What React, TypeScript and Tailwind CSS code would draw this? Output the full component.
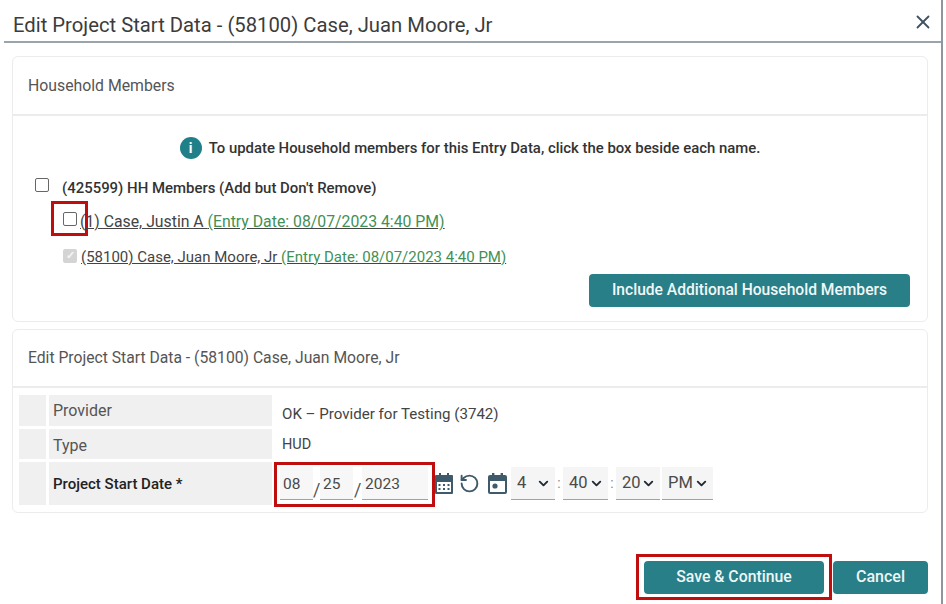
import { ChevronDown, RotateCcw, X } from "lucide-react";

const TEAL = "bg-[#287f88]";

const CalendarGrid = () => (
  <svg width="18" height="21" viewBox="0 0 18 21" fill="#3f5a6b">
    <rect x="4" y="0" width="2" height="4" />
    <rect x="12" y="0" width="2" height="4" />
    <path d="M1 2h16a1 1 0 0 1 1 1v17a1 1 0 0 1-1 1H1a1 1 0 0 1-1-1V3a1 1 0 0 1 1-1z" />
    <rect x="2" y="9" width="14" height="10" fill="#fff" />
    <g fill="#3f5a6b">
      <rect x="3.5" y="11" width="2" height="2" />
      <rect x="8" y="11" width="2" height="2" />
      <rect x="12.5" y="11" width="2" height="2" />
      <rect x="3.5" y="15" width="2" height="2" />
      <rect x="8" y="15" width="2" height="2" />
      <rect x="12.5" y="15" width="2" height="2" />
    </g>
  </svg>
);

const CalendarToday = () => (
  <svg width="19" height="21" viewBox="0 0 19 21" fill="#3f5a6b">
    <rect x="4" y="0" width="2.4" height="4" />
    <rect x="12.6" y="0" width="2.4" height="4" />
    <path d="M2 2h15a2 2 0 0 1 2 2v15a2 2 0 0 1-2 2H2a2 2 0 0 1-2-2V4a2 2 0 0 1 2-2z" />
    <rect x="2" y="8" width="15" height="11" fill="#fff" />
    <circle cx="7" cy="13" r="2.6" />
  </svg>
);

const TimeSelect = ({ value, width }: { value: string; width: string }) => (
  <div className={`flex h-[33px] items-center justify-between border-b border-[#9aa5ab] bg-[#f5f5f5] pl-[6px] pr-[4px] ${width}`}>
    <span className="text-[16.5px] text-[#4a4a4a]">{value}</span>
    <ChevronDown size={15} strokeWidth={3} className="text-[#1f2933]" />
  </div>
);

const DatePart = ({ value, width }: { value: string; width: string }) => (
  <div className={`flex h-[33px] items-center border-b border-[#9aa5ab] bg-[#f7f7f7] pl-[3px] pt-[3px] text-[15.5px] text-[#4a4a4a] ${width}`}>
    {value}
  </div>
);

const Row = ({
  label,
  bold,
  height,
  labelPad,
  children,
}: {
  label: string;
  bold?: boolean;
  height: string;
  labelPad: string;
  children: React.ReactNode;
}) => (
  <div className={`flex ${height}`}>
    <div className="w-[27px] bg-[#f0f0f0]" />
    <div className={`ml-[3px] flex w-[223px] items-center bg-[#f0f0f0] pl-[4px] ${labelPad} ${bold ? "text-[15px] font-medium text-[#222]" : "text-[16px] text-[#555]"}`}>
      {label}
    </div>
    {children}
  </div>
);

export default function App() {
  return (
    <div
      className="h-[604px] w-[946px] overflow-hidden bg-white pl-[4px]"
      style={{ fontFamily: "Roboto, sans-serif" }}
    >
      <div className="h-[604px] w-[939px] border-r-2 border-[#8f979c]">
        <div className="flex h-[43px] items-start justify-between border-b-2 border-[#9aa5ab] pl-[9px] pr-[7px] pt-[10px]">
          <h1 className="text-[20.25px] text-[#3c3c3c]">
            Edit Project Start Data - (58100) Case, Juan Moore, Jr
          </h1>
          <X size={22} strokeWidth={2} className="mt-[1px] text-[#40525f]" />
        </div>

        <div className="ml-[8px] mt-[13px] h-[266px] w-[916px] rounded-[6px] border border-[#ececec]">
          <div className="flex h-[59px] items-center border-b-2 border-[#ececec] pl-[15px] text-[15.8px] text-[#555]">
            Household Members
          </div>
          <div className="flex h-[43px] items-end justify-center gap-[7px] text-[14.9px] text-[#333]">
            <span className="flex h-[22px] w-[22px] items-center justify-center rounded-full bg-[#1f8089] text-[14px] font-bold text-white">
              i
            </span>
            <span className="font-medium">
              To update Household members for this Entry Data, click the box beside each name.
            </span>
          </div>
          <div className="ml-[22px] mt-[16px] flex h-[20px] items-center gap-[13px] text-[14.95px] font-medium text-[#333]">
            <span className="h-[14px] w-[14px] rounded-[2px] border border-[#666]" />
            <span className="pt-[6px]">(425599) HH Members (Add but Don't Remove)</span>
          </div>
          <div className="ml-[38px] mt-[6px] flex h-[35px] items-center">
            <div className="flex h-[35px] w-[37px] items-center justify-center border-[3px] border-[#c00d0d]">
              <span className="h-[14px] w-[14px] rounded-[2px] border border-[#666]" />
            </div>
            <span className="-ml-[8px] pt-[7px] text-[15.8px] text-[#444] underline">
              (1) Case, Justin A <span className="text-[#3f9155]">(Entry Date: 08/07/2023 4:40 PM)</span>
            </span>
          </div>
          <div className="ml-[50px] mt-[3px] flex h-[34px] items-center gap-[4px]">
            <span className="flex h-[14px] w-[14px] items-center justify-center rounded-[2px] bg-[#d4d4d4] text-[11px] font-bold text-[#f4f4f4]">
              ✓
            </span>
            <span className="pt-[2px] text-[15px] text-[#444] underline">
              (58100) Case, Juan Moore, Jr <span className="text-[#3f9155]">(Entry Date: 08/07/2023 4:40 PM)</span>
            </span>
          </div>
          <div className="mt-[1px] flex justify-end pr-[17px]">
            <button className={`h-[33px] w-[321px] rounded-[4px] pt-[1px] text-[15.6px] font-medium text-[#f1f7f7] ${TEAL}`}>
              Include Additional Household Members
            </button>
          </div>
        </div>

        <div className="ml-[8px] mt-[7px] h-[184px] w-[916px] rounded-[6px] border border-[#ececec]">
          <div className="flex h-[58px] items-center border-b-2 border-[#ececec] pl-[15px] text-[15.7px] text-[#555]">
            Edit Project Start Data - (58100) Case, Juan Moore, Jr
          </div>
          <div className="ml-[6px] mt-[7px] flex flex-col gap-[3px]">
            <Row label="Provider" height="h-[31px]" labelPad="pt-[1px]">
              <div className="flex items-center pl-[10px] pt-[8px] text-[15.1px] text-[#444]">
                OK – Provider for Testing (3742)
              </div>
            </Row>
            <Row label="Type" height="h-[30px]" labelPad="pt-[3px]">
              <div className="flex items-center pl-[10px] pt-[2px] text-[14.5px] text-[#444]">HUD</div>
            </Row>
            <Row label="Project Start Date *" bold height="h-[43px]" labelPad="pt-[2px]">
              <div className="ml-[2px] flex h-[45px] w-[161px] items-start border-[3px] border-[#c00d0d] pl-[3px] pt-[2px]">
                <DatePart value="08" width="w-[33px]" />
                <span className="mt-[9px] w-[7px] text-[18px] text-[#555]">/</span>
                <DatePart value="25" width="w-[33px]" />
                <span className="mt-[9px] w-[9px] pl-[1px] text-[18px] text-[#555]">/</span>
                <DatePart value="2023" width="w-[66px]" />
              </div>
              <div className="flex items-center">
                <CalendarGrid />
              </div>
              <div className="ml-[6px] flex items-center">
                <RotateCcw size={21} strokeWidth={2.2} className="text-[#3f5a6b]" />
              </div>
              <div className="ml-[8px] flex items-center">
                <CalendarToday />
              </div>
              <div className="ml-[4px] flex items-center text-[14px] text-[#8a8a8a]">
                <TimeSelect value="4" width="w-[44px]" />
                <span className="w-[8px] text-center">:</span>
                <TimeSelect value="40" width="w-[45px]" />
                <span className="w-[8px] text-center">:</span>
                <TimeSelect value="20" width="w-[44px]" />
                <TimeSelect value="PM" width="ml-[2px] w-[51px]" />
              </div>
            </Row>
          </div>
        </div>

        <div className="ml-[632px] mt-[41px] flex items-center">
          <div className="flex h-[46px] w-[196px] items-center justify-center border-[3px] border-[#c00d0d]">
            <button className={`h-[33px] w-[180px] rounded-[4px] text-[15.8px] font-medium text-[#eef6f6] ${TEAL}`}>
              Save &amp; Continue
            </button>
          </div>
          <button className={`ml-[1px] h-[33px] w-[95px] rounded-[4px] text-[16px] font-medium text-[#eef6f6] ${TEAL}`}>
            Cancel
          </button>
        </div>
      </div>
    </div>
  );
}
